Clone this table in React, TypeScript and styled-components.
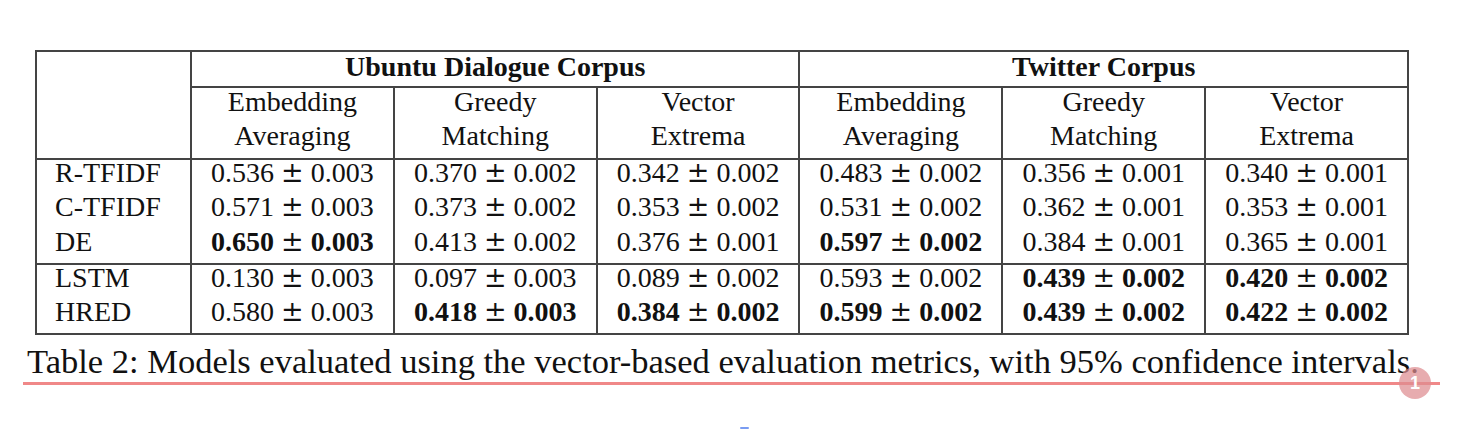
import React from 'react';
import styled, { createGlobalStyle } from 'styled-components';

const GlobalStyle = createGlobalStyle`
  html, body {
    margin: 0;
    padding: 0;
    background: #ffffff;
  }
  body {
    font-family: "Liberation Serif", "Times New Roman", serif;
    color: #111;
  }
`;

const Page = styled.div`
  width: 1476px;
  height: 430px;
  overflow: hidden;
  padding-top: 50px;
  box-sizing: border-box;
`;

const Table = styled.table`
  margin-left: 35px;
  width: 1374px;
  border-collapse: collapse;
  table-layout: fixed;
  border: 2px solid #444;
  font-size: 28px;
`;

const Th = styled.th<{ $left?: boolean }>`
  font-weight: bold;
  text-align: center;
  line-height: 31px;
  padding: 0 0 3px;
  border-left: ${({ $left }) => ($left ? '2px solid #444' : 'none')};
  border-bottom: 2px solid #444;
  & span {
    position: relative;
    top: -1px;
  }
`;

const SubTh = styled.th`
  font-weight: normal;
  text-align: center;
  line-height: 34px;
  padding: 0 0 2px;
  border-left: 2px solid #444;
  border-bottom: 2px solid #444;
  & span {
    display: block;
    position: relative;
    top: -3px;
  }
`;

const Corner = styled.th`
  border-bottom: 2px solid #444;
  padding: 0;
`;

const Group = styled.tbody`
  & + & {
    border-top: 2px solid #444;
  }
  & td {
    height: 35px;
    vertical-align: top;
    line-height: 25px;
    padding-top: 0;
    padding-bottom: 0;
    box-sizing: border-box;
  }
`;

const Name = styled.td`
  text-align: left;
  padding-left: 18px;
`;

const Cell = styled.td`
  text-align: center;
  padding-left: 0;
  padding-right: 0;
  border-left: 2px solid #444;
  white-space: nowrap;
`;

const B = styled.b`
  font-weight: bold;
`;

const Pm = styled.span`
  font-family: "DejaVu Serif", "Liberation Serif", serif;
  font-weight: normal;
  font-size: 27px;
  margin: 0 7px;
`;

const CaptionRow = styled.div`
  position: relative;
  margin-left: 23px;
  width: 1417px;
  border-bottom: 3px solid #f08888;
  padding-left: 4px;
  box-sizing: border-box;
  font-size: 34.5px;
  line-height: 42px;
  margin-top: 5px;
  white-space: nowrap;
`;

const Badge = styled.span`
  position: absolute;
  right: 9px;
  bottom: -17px;
  width: 32px;
  height: 32px;
  border-radius: 50%;
  background: rgba(222, 140, 144, 0.72);
  color: #fff;
  font-family: "Liberation Sans", Arial, sans-serif;
  font-weight: bold;
  font-size: 18px;
  line-height: 32px;
  text-align: center;
`;

const BlueMark = styled.div`
  margin: 42px 0 0 740px;
  width: 9px;
  height: 2px;
  border-radius: 1px;
  background: #7a9cf2;
`;

type Val = { v: string; e: string; bold?: boolean };

const Value: React.FC<Val> = ({ v, e, bold }) =>
  bold ? (
    <>
      <B>{v}</B>
      <Pm>±</Pm>
      <B>{e}</B>
    </>
  ) : (
    <>
      {v}
      <Pm>±</Pm>
      {e}
    </>
  );

const row = (name: string, cells: [string, string, boolean?][]) => ({ name, cells });

const groups = [
  [
    row('R-TFIDF', [
      ['0.536', '0.003'],
      ['0.370', '0.002'],
      ['0.342', '0.002'],
      ['0.483', '0.002'],
      ['0.356', '0.001'],
      ['0.340', '0.001'],
    ]),
    row('C-TFIDF', [
      ['0.571', '0.003'],
      ['0.373', '0.002'],
      ['0.353', '0.002'],
      ['0.531', '0.002'],
      ['0.362', '0.001'],
      ['0.353', '0.001'],
    ]),
    row('DE', [
      ['0.650', '0.003', true],
      ['0.413', '0.002'],
      ['0.376', '0.001'],
      ['0.597', '0.002', true],
      ['0.384', '0.001'],
      ['0.365', '0.001'],
    ]),
  ],
  [
    row('LSTM', [
      ['0.130', '0.003'],
      ['0.097', '0.003'],
      ['0.089', '0.002'],
      ['0.593', '0.002'],
      ['0.439', '0.002', true],
      ['0.420', '0.002', true],
    ]),
    row('HRED', [
      ['0.580', '0.003'],
      ['0.418', '0.003', true],
      ['0.384', '0.002', true],
      ['0.599', '0.002', true],
      ['0.439', '0.002', true],
      ['0.422', '0.002', true],
    ]),
  ],
];

const metrics = [
  ['Embedding', 'Averaging'],
  ['Greedy', 'Matching'],
  ['Vector', 'Extrema'],
];

export default function App() {
  return (
    <Page>
      <GlobalStyle />
      <Table>
        <colgroup>
          <col style={{ width: 155 }} />
          {[...Array(6)].map((_, i) => (
            <col key={i} />
          ))}
        </colgroup>
        <thead>
          <tr>
            <Corner rowSpan={2} />
            <Th colSpan={3} $left>
              <span>Ubuntu Dialogue Corpus</span>
            </Th>
            <Th colSpan={3} $left>
              <span>Twitter Corpus</span>
            </Th>
          </tr>
          <tr>
            {[...metrics, ...metrics].map(([a, b], i) => (
              <SubTh key={i}>
                <span>{a}</span>
                <span>{b}</span>
              </SubTh>
            ))}
          </tr>
        </thead>
        {groups.map((rows, gi) => (
          <Group key={gi}>
            {rows.map((r) => (
              <tr key={r.name}>
                <Name>{r.name}</Name>
                {r.cells.map(([v, e, bold], ci) => (
                  <Cell key={ci}>
                    <Value v={v} e={e} bold={bold} />
                  </Cell>
                ))}
              </tr>
            ))}
          </Group>
        ))}
      </Table>
      <CaptionRow>
        Table 2: Models evaluated using the vector-based evaluation metrics, with 95% confidence intervals.
        <Badge>1</Badge>
      </CaptionRow>
      <BlueMark />
    </Page>
  );
}
